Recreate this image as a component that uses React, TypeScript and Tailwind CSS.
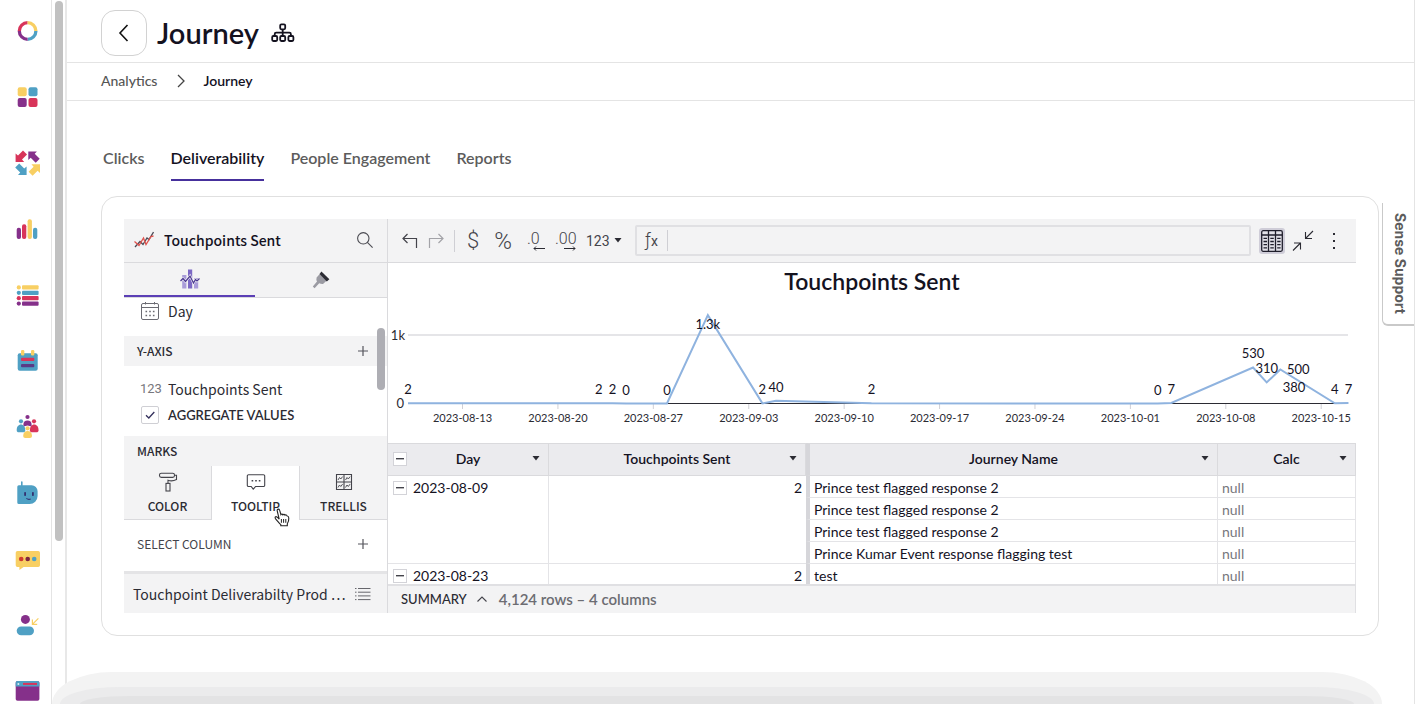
import React from 'react';
import { clsx } from 'clsx';

const RED = '#d8345a';
const YELLOW = '#f8cf63';
const BLUE = '#4fa0c4';
const PURPLE = '#85308a';

const ARROW = 'M0 0H8.6L6.4 2.4L11.4 7.4L7.4 11.4L2.4 6.4L0 8.6Z';

interface NavItem {
  label: string;
  icon: React.ReactNode;
}

const navItems: NavItem[] = [
  {
    label: 'Home',
    icon: (
      <g fill="none" strokeWidth="3.3">
        <path d="M6.3 15a8.3 8.3 0 0 1 8.3-8.3" stroke={RED} />
        <path d="M14.6 6.7a8.3 8.3 0 0 1 8.3 8.3" stroke={YELLOW} />
        <path d="M22.9 15a8.3 8.3 0 0 1-8.3 8.3" stroke={BLUE} />
        <path d="M14.6 23.3a8.3 8.3 0 0 1-8.3-8.3" stroke={PURPLE} />
      </g>
    ),
  },
  {
    label: 'Apps',
    icon: (
      <>
        <rect x="4.7" y="5.3" width="9" height="9" rx="2" fill={YELLOW} />
        <rect x="15.5" y="5.3" width="9" height="9" rx="2" fill={BLUE} />
        <rect x="4.7" y="16" width="9" height="9" rx="2" fill={PURPLE} />
        <rect x="15.5" y="16" width="9" height="9" rx="2" fill={RED} />
      </>
    ),
  },
  {
    label: 'Journeys',
    icon: (
      <>
        <path d={ARROW} fill={RED} transform="translate(2.6 14) scale(1 -1)" />
        <path d={ARROW} fill={PURPLE} transform="translate(15.3 3.4)" />
        <path d={ARROW} fill={BLUE} transform="translate(13.6 27) scale(-1 -1)" />
        <path d={ARROW} fill={YELLOW} transform="translate(27 16.3) scale(-1 1)" />
      </>
    ),
  },
  {
    label: 'Analytics',
    icon: (
      <>
        <rect x="3.7" y="13.7" width="4.3" height="11.3" rx="2" fill={PURPLE} />
        <rect x="9" y="10.3" width="4.3" height="14.7" rx="2" fill={RED} />
        <rect x="14.6" y="5.3" width="4.3" height="19.7" rx="2" fill={YELLOW} />
        <rect x="20" y="13.7" width="4.3" height="11.3" rx="2" fill={BLUE} />
      </>
    ),
  },
  {
    label: 'Lists',
    icon: (
      <>
        {[YELLOW, BLUE, RED, PURPLE].map((color, i) => (
          <g key={color} fill={color}>
            <circle cx="5.8" cy={7.4 + i * 5.4} r="2.1" />
            <rect x="9" y={5.3 + i * 5.4} width="16.6" height="4.2" rx="1" />
          </g>
        ))}
      </>
    ),
  },
  {
    label: 'Calendar',
    icon: (
      <>
        <rect x="4.7" y="7.3" width="20" height="17.4" rx="2" fill={BLUE} />
        <rect x="8" y="4" width="3.3" height="5.5" rx="1.2" fill={YELLOW} />
        <rect x="18" y="4" width="3.3" height="5.5" rx="1.2" fill={YELLOW} />
        <rect x="8" y="11.8" width="13.3" height="3.2" rx="1" fill={RED} />
        <rect x="8" y="18" width="13.3" height="3.2" rx="1" fill="#5b3a86" />
      </>
    ),
  },
  {
    label: 'Contacts',
    icon: (
      <>
        <circle cx="14.5" cy="5" r="2.1" fill={PURPLE} />
        <circle cx="8" cy="9.3" r="2.1" fill={BLUE} />
        <circle cx="21" cy="9.3" r="2.1" fill={RED} />
        <path d="M10.4 14.5V12.6a4.1 4.1 0 0 1 8.2 0V14.5L14.5 13.6Z" fill={PURPLE} />
        <path d="M3.7 18.2c0-3.4 1.8-5.6 4.3-5.6s4.3 2.2 4.3 5.6c0 1.5-.8 2-2.1 2H5.8c-1.3 0-2.1-.5-2.1-2Z" fill={BLUE} />
        <path d="M16.9 18.2c0-3.4 1.8-5.6 4.3-5.6s4.3 2.2 4.3 5.6c0 1.5-.8 2-2.1 2H19c-1.3 0-2.1-.5-2.1-2Z" fill={RED} />
        <circle cx="14.6" cy="16.3" r="2.1" fill={YELLOW} />
        <path d="M10.2 23.8c0-2.8 1.8-4.8 4.4-4.8s4.4 2 4.4 4.8c0 1.6-.8 2.2-2.1 2.2h-4.6c-1.3 0-2.1-.6-2.1-2.2Z" fill={YELLOW} />
      </>
    ),
  },
  {
    label: 'Assistant',
    icon: (
      <>
        <rect x="8" y="3.3" width="1.6" height="5" rx=".8" fill={BLUE} />
        <path d="M5.8 7.3H18.6a6 6 0 0 1 6 6V18a8 8 0 0 1-8 8H5.8a1.5 1.5 0 0 1-1.5-1.5V8.8a1.5 1.5 0 0 1 1.5-1.5Z" fill={BLUE} />
        <rect x="11.2" y="14" width="1.8" height="4" rx=".8" fill="#33306f" />
        <rect x="19" y="14" width="1.8" height="4" rx=".8" fill="#33306f" />
        <path d="M13.4 20.4q2 1.6 4.3.6" fill="none" stroke="#33306f" strokeWidth="1.1" />
      </>
    ),
  },
  {
    label: 'Messages',
    icon: (
      <>
        <path d="M4.5 7h20.7a1.8 1.8 0 0 1 1.8 1.8v12.4a1.8 1.8 0 0 1-1.8 1.8H10.6L6.4 26V23H4.5a1.8 1.8 0 0 1-1.8-1.8V8.8A1.8 1.8 0 0 1 4.5 7Z" fill={YELLOW} />
        <circle cx="8.2" cy="15" r="2.3" fill="#cf3a2e" />
        <circle cx="14.7" cy="15" r="2.3" fill="#7d2440" />
        <circle cx="21.2" cy="15" r="2.3" fill={BLUE} />
      </>
    ),
  },
  {
    label: 'Referrals',
    icon: (
      <>
        <circle cx="12.4" cy="9.4" r="4.5" fill={PURPLE} />
        <rect x="3.7" y="16.4" width="17.3" height="8.8" rx="4.4" fill={BLUE} />
        <path d="M25.4 8.3L19.6 14.1M19.4 9.6V14.4H24.2" fill="none" stroke={YELLOW} strokeWidth="1.2" />
      </>
    ),
  },
  {
    label: 'Pages',
    icon: (
      <>
        <rect x="2.7" y="5" width="23.7" height="19.7" rx="1.8" fill={PURPLE} />
        <path d="M4.5 5h20.1a1.8 1.8 0 0 1 1.8 1.8V10.6H2.7V6.8A1.8 1.8 0 0 1 4.5 5Z" fill={BLUE} />
        <path d="M10 7.9H24" stroke={RED} strokeWidth="2" />
        <circle cx="5.4" cy="7.9" r="1" fill="#d9eef6" />
      </>
    ),
  },
];

function Sidebar() {
  return (
    <aside className="sticky top-0 flex h-screen shrink-0 overflow-hidden">
      <nav className="flex w-[52px] flex-col gap-9 border-r border-[#e4e4e4] pt-4 pl-[13px]">
        {navItems.map((item) => (
          <a key={item.label} href="#" aria-label={item.label} className="block size-[30px] shrink-0">
            <svg viewBox="0 0 30 30" className="size-[30px]">
              {item.icon}
            </svg>
          </a>
        ))}
      </nav>
      <div className="w-[15px] border-r-2 border-[#e8e8e8] pt-px pl-[3px]">
        <div className="h-[540px] w-2 rounded-full bg-[#c1c1c1]" />
      </div>
    </aside>
  );
}

function PageHeader() {
  return (
    <>
      <header className="flex h-[63px] items-center border-b border-[#e4e4e4] pt-1 pl-[34px]">
        <button aria-label="Back" className="flex size-[46px] items-center justify-center rounded-[14px] border border-[#d2d2d2]">
          <svg viewBox="0 0 16 18" className="h-[18px] w-4" fill="none" stroke="#111" strokeWidth="1.6">
            <path d="M11.5 1L4 9L11.5 17" />
          </svg>
        </button>
        <h1 className="ml-[10px] text-[29px] leading-9 font-semibold text-[#14121f]">Journey</h1>
        <svg viewBox="0 0 24 20" className="ml-3 h-5 w-6" fill="none" stroke="#14121f" strokeWidth="1.8">
          <rect x="9.2" y="1.3" width="5" height="5" rx="1.2" />
          <rect x="1.2" y="13" width="5" height="5" rx="1.2" />
          <rect x="9.2" y="13" width="5" height="5" rx="1.2" />
          <rect x="17.4" y="13" width="5" height="5" rx="1.2" />
          <path d="M11.7 6.3V13M3.7 13V11.2A1.5 1.5 0 0 1 5.2 9.7H18.4A1.5 1.5 0 0 1 19.9 11.2V13" />
        </svg>
      </header>
      <nav aria-label="Breadcrumb" className="flex h-[38px] items-center border-b border-[#e4e4e4] pb-px pl-[34px] text-[14px] leading-5">
        <a href="#" className="font-medium text-[#555]">
          Analytics
        </a>
        <svg viewBox="0 0 8 14" className="mr-[18px] ml-5 h-[14px] w-2" fill="none" stroke="#444" strokeWidth="1.3">
          <path d="M1 1L7 7L1 13" />
        </svg>
        <span className="font-semibold text-[#14121f]">Journey</span>
      </nav>
    </>
  );
}

const tabs = ['Clicks', 'Deliverability', 'People Engagement', 'Reports'];

function Tabs() {
  return (
    <nav className="mt-11 flex gap-[26px] pl-[2px] text-[16px] leading-[26px] font-semibold">
      {tabs.map((tab) => (
        <a
          key={tab}
          href="#"
          className={clsx(
            'h-9 border-b-2',
            tab === 'Deliverability' ? 'border-[#46309c] text-[#14121f]' : 'border-transparent text-[#5c5c5c]'
          )}
        >
          {tab}
        </a>
      ))}
    </nav>
  );
}

function Caret() {
  return (
    <svg viewBox="0 0 8 5" className="h-[5px] w-2" fill="#2b2b33">
      <path d="M0.5 0H7.5L4 4.5Z" />
    </svg>
  );
}

function PlusIcon() {
  return (
    <svg viewBox="0 0 10 10" className="size-[10px]" stroke="#55555c" strokeWidth="1.2">
      <path d="M5 0V10M0 5H10" />
    </svg>
  );
}

function PanelHeader() {
  return (
    <div className="flex h-11 items-center border-b border-[#dadadd] bg-[#f3f3f4] px-[10px] pb-px">
      <svg viewBox="0 0 20 18" className="h-[18px] w-5" fill="none" strokeWidth="1.3">
        <path d="M1 16L6 10.5L9 13.5L13 7L15 8.5L19.5 1" stroke="#4b4b57" />
        <path d="M0.5 10.5L5 14.5L9.5 7L12 13.5L17 5.5L19.5 5" stroke="#e0524d" />
      </svg>
      <h2 className="ml-[10px] grow text-[14px] leading-6 font-medium text-[#14121f]">Touchpoints Sent</h2>
      <button aria-label="Search" className="mr-1">
        <svg viewBox="0 0 16 16" className="size-4" fill="none" stroke="#4b4b52" strokeWidth="1.1">
          <circle cx="6.3" cy="6.3" r="5.7" />
          <path d="M10.4 10.4L15.6 15.6" />
        </svg>
      </button>
    </div>
  );
}

function PanelModes() {
  return (
    <div className="flex h-[35px] border-b border-[#dadadd] bg-[#f3f3f4]">
      <button aria-label="Properties" className="flex w-[131px] items-center justify-center border-b-2 border-[#5b3fb5]">
        <svg viewBox="0 0 20 20" className="size-5">
          <rect x="2.2" y="6" width="4.2" height="13.5" fill="#a99cd9" />
          <rect x="8" y="0.5" width="4.2" height="19" fill="#7c68c4" />
          <rect x="14" y="9" width="4.2" height="10.5" fill="#a99cd9" />
          <path d="M0.5 12L3 9.5L5.5 12.5L10 7L13.5 14L15.5 10.5L17 12L19.5 9.5" fill="none" stroke="#f3f3f4" strokeWidth="2.4" />
          <path d="M0.5 12L3 9.5L5.5 12.5L10 7L13.5 14L15.5 10.5L17 12L19.5 9.5" fill="none" stroke="#4a3790" strokeWidth="1.2" />
        </svg>
      </button>
      <button aria-label="Format" className="flex grow items-center justify-center">
        <svg viewBox="0 0 18 18" className="size-[18px]">
          <path d="M8.2 2.6L14.8 9.6L11 13Q9 13.2 7.2 12.2L2.6 17.2L0.8 15.6L5 10.6Q4 8.4 4.6 6.4Z" fill="#9b9ba3" />
          <path d="M9.4 0.6L17.4 8.2L14.8 10.4L7.6 3Z" fill="#2b2b33" />
        </svg>
      </button>
    </div>
  );
}

function CalendarIcon() {
  return (
    <svg viewBox="0 0 18 18" className="size-[18px]" fill="none" stroke="#6b6b72" strokeWidth="1">
      <rect x="0.5" y="1.5" width="17" height="16" rx="1.5" />
      <path d="M0.5 5.5H17.5M4.5 0V2.5M13.5 0V2.5" />
      <path d="M4.5 9.5H13.5M4.5 13.5H13.5" strokeWidth="1.6" strokeDasharray="1.6 2.1" />
    </svg>
  );
}

function ColorIcon() {
  return (
    <svg viewBox="0 0 20 20" className="size-5" fill="none" stroke="#44444b" strokeWidth="1.1">
      <rect x="1.5" y="1.2" width="15" height="4.2" rx="1.8" />
      <path d="M16.5 3.3H18.5V7.6Q14 9.8 10 8.2V11.4" />
      <rect x="8" y="11.4" width="4" height="7.6" />
    </svg>
  );
}

function TooltipIcon() {
  return (
    <svg viewBox="0 0 20 20" className="size-5" fill="none" stroke="#44444b" strokeWidth="1.1">
      <path d="M2.5 2.8H17.5A1.2 1.2 0 0 1 18.7 4V13.3A1.2 1.2 0 0 1 17.5 14.5H9.6L7.2 17.2L5.2 14.5H2.5A1.2 1.2 0 0 1 1.3 13.3V4A1.2 1.2 0 0 1 2.5 2.8Z" />
      <path d="M5.6 8.8H7.2M9.2 8.8H10.8M12.8 8.8H14.4" strokeWidth="1.5" />
    </svg>
  );
}

function TrellisIcon() {
  return (
    <svg viewBox="0 0 20 20" className="size-5" fill="none" stroke="#44444b" strokeWidth="1.1">
      <path d="M2.5 2.5H17.5V17.5H2.5ZM10 2.5V17.5M2.5 10H17.5" />
      <path
        d="M4 8L5.5 5.5L6.8 7L8.6 4.6M11.5 8L13 5.5L14.3 7L16.1 4.6M4 15.5L5.5 13L6.8 14.5L8.6 12.1M11.5 15.5L13 13L14.3 14.5L16.1 12.1"
        strokeWidth="0.9"
      />
    </svg>
  );
}

function HandCursor() {
  return (
    <svg viewBox="0 0 16 19" className="pointer-events-none absolute top-[42px] right-[9px] h-[19px] w-4">
      <path
        d="M5.2 11.2L3.2 2.8C3 1.8 3.6 1.1 4.3 1.1S5.5 1.6 5.7 2.4L6.9 6.6C7.3 5.9 8.5 5.9 8.9 6.8C9.5 6 10.7 6.2 11 7.2C11.7 6.6 12.8 6.8 13.2 8C14.2 8 14.7 8.8 14.8 10C14.9 12.4 14.4 14.2 13.3 15.8V17.8H6.8V16.6C5.4 15.4 3.8 13.2 1.6 10.8C0.9 9.9 1 9.2 1.6 8.8C2.3 8.3 3.3 8.8 5.2 11.2Z"
        fill="#fff"
        stroke="#222"
        strokeWidth="1.1"
      />
      <path d="M7.4 11V14.8M9.6 11V14.8M11.8 11V14.8" stroke="#222" strokeWidth="1" />
    </svg>
  );
}

const marks = [
  { label: 'COLOR', icon: <ColorIcon /> },
  { label: 'TOOLTIP', icon: <TooltipIcon /> },
  { label: 'TRELLIS', icon: <TrellisIcon /> },
];

function EditorPanel() {
  return (
    <div className="flex w-[264px] shrink-0 flex-col border-r border-[#dadadd] font-['Noto_Sans_CJK_SC','Open_Sans',sans-serif] text-[#2b2b33]">
      <PanelHeader />
      <PanelModes />
      <div className="relative grow">
        <div className="mb-3 flex h-[26px] items-center pl-[17px]">
          <CalendarIcon />
          <span className="ml-[9px] text-[14px] leading-6">Day</span>
        </div>
        <div className="flex h-[30px] items-center justify-between bg-[#f3f3f4] pr-[19px] pl-[13px]">
          <h3 className="text-[12px] leading-5 font-medium">Y-AXIS</h3>
          <button aria-label="Add y-axis column">
            <PlusIcon />
          </button>
        </div>
        <div className="pt-[10px] pb-2 pl-4">
          <div className="flex h-[26px] items-center pb-px">
            <span className="w-7 font-['Roboto',sans-serif] text-[13px] leading-5 text-[#77777d]">123</span>
            <span className="text-[14px] leading-6">Touchpoints Sent</span>
          </div>
          <label className="flex h-[26px] items-center">
            <span className="mr-[9px] ml-px grid size-[18px]">
              <input
                type="checkbox"
                defaultChecked
                className="peer col-start-1 row-start-1 size-[18px] appearance-none rounded-[2px] border border-[#cfcfd4] bg-white"
              />
              <svg
                viewBox="0 0 18 18"
                className="pointer-events-none col-start-1 row-start-1 hidden peer-checked:block"
                fill="none"
                stroke="#33305c"
                strokeWidth="1.3"
              >
                <path d="M5 9.3L7.8 12L13.3 6" />
              </svg>
            </span>
            <span className="font-['Lato',sans-serif] text-[13px] leading-5 font-semibold">AGGREGATE VALUES</span>
          </label>
        </div>
        <h3 className="flex h-[30px] items-center bg-[#f3f3f4] pl-[13px] text-[12px] leading-5 font-medium">MARKS</h3>
        <div className="grid h-[54px] grid-cols-[87px_89px_1fr]">
          {marks.map(({ label, icon }) => (
            <button
              key={label}
              className={clsx(
                'relative flex flex-col items-center pt-[6px] text-[12px] leading-5 font-medium',
                label === 'TOOLTIP' ? 'border-x border-[#dadadd] bg-white' : 'border-b border-[#dadadd] bg-[#f3f3f4]'
              )}
            >
              {icon}
              <span className="mt-1">{label}</span>
              {label === 'TOOLTIP' && <HandCursor />}
            </button>
          ))}
        </div>
        <div className="flex h-[51px] items-center justify-between pr-[19px] pb-1 pl-[13px]">
          <span className="text-[12px] leading-5 text-[#44444b]">SELECT COLUMN</span>
          <button aria-label="Add tooltip column">
            <PlusIcon />
          </button>
        </div>
        <div className="absolute top-[30px] right-[2px] h-[62px] w-2 rounded-full bg-[#aeaeb4]" />
      </div>
      <div className="flex h-[42px] items-center justify-between border-t-3 border-[#e4e4e6] bg-[#f3f3f4] pr-4 pl-[9px]">
        <span className="text-[14px] leading-6">Touchpoint Deliverabilty Prod …</span>
        <svg viewBox="0 0 16 14" className="h-[14px] w-4" stroke="#66666c" strokeWidth="1">
          <path d="M0 1.5H1.5M0 5.2H1.5M0 8.9H1.5M0 12.6H1.5M3 1.5H15.5M3 5.2H15.5M3 8.9H15.5M3 12.6H15.5" />
        </svg>
      </div>
    </div>
  );
}

function Toolbar() {
  return (
    <div className="flex h-11 items-center border-b border-[#dadadd] bg-[#f3f3f4] pr-5 pl-[14px] font-['Roboto',sans-serif] text-[#44444b]">
      <button aria-label="Undo">
        <svg viewBox="0 0 16 16" className="size-4" fill="none" stroke="#44444b" strokeWidth="1.2">
          <path d="M5.5 1L1 5.5L5.5 10M1 5.5H14.5V15" />
        </svg>
      </button>
      <button aria-label="Redo" className="ml-[10px]">
        <svg viewBox="0 0 16 16" className="size-4" fill="none" stroke="#a3a3a8" strokeWidth="1.2">
          <path d="M10.5 1L15 5.5L10.5 10M15 5.5H1.5V15" />
        </svg>
      </button>
      <div className="ml-[10px] h-[22px] w-px bg-[#cfcfd4]" />
      <button aria-label="Currency" className="ml-3 w-3 text-[22px] leading-7 font-light">
        $
      </button>
      <button aria-label="Percent" className="ml-[14px] w-5 text-[24px] leading-7 font-light">
        %
      </button>
      <button aria-label="Fewer decimals" className="ml-[14px] flex w-[18px] flex-col items-start">
        <span className="text-[16px] leading-4 font-light">.0</span>
        <svg viewBox="0 0 12 5" className="-mt-px ml-[6px] h-[5px] w-3" fill="none" stroke="#2b2b33">
          <path d="M12 2.5H1M3 0.5L1 2.5L3 4.5" />
        </svg>
      </button>
      <button aria-label="More decimals" className="ml-[10px] flex w-[21px] flex-col items-start">
        <span className="text-[16px] leading-4 font-light">.00</span>
        <svg viewBox="0 0 12 5" className="-mt-px ml-[9px] h-[5px] w-3" fill="none" stroke="#2b2b33">
          <path d="M0 2.5H11M9 0.5L11 2.5L9 4.5" />
        </svg>
      </button>
      <label className="ml-[10px] grid w-9 items-center">
        <select aria-label="Number format" className="col-start-1 row-start-1 w-9 appearance-none text-[14px] leading-5">
          <option>123</option>
        </select>
        <span className="pointer-events-none col-start-1 row-start-1 justify-self-end">
          <Caret />
        </span>
      </label>
      <label className="ml-[13px] flex h-[31px] min-w-0 grow items-center rounded-[2px] border-2 border-[#e0e0e3] pl-2">
        <span className="flex w-[23px] items-baseline border-r border-[#cfcfd4] text-[18px] leading-5 font-light">
          ƒ<span className="text-[14px] font-normal">x</span>
        </span>
        <input aria-label="Formula" className="min-w-0 grow bg-transparent px-2 text-[14px] outline-none" />
      </label>
      <button aria-label="Toggle table" className="ml-2 flex size-[26px] items-center justify-center rounded-[3px] bg-[#cfcdd8]">
        <svg viewBox="0 0 22 22" className="size-[22px]" fill="none" stroke="#1f1e2b" strokeWidth="1.3">
          <rect x="0.7" y="0.7" width="20.6" height="20.6" rx="1.5" fill="#e2e1e8" />
          <path d="M0.7 5H21.3M7.5 0.7V21.3M14.5 0.7V21.3" />
          <path d="M2.5 8.3H6M2.5 11.5H6M2.5 14.7H6M2.5 17.9H6M9.3 8.3H12.8M9.3 11.5H12.8M9.3 14.7H12.8M9.3 17.9H12.8M16.2 8.3H19.6M16.2 11.5H19.6M16.2 14.7H19.6M16.2 17.9H19.6" />
        </svg>
      </button>
      <button aria-label="Collapse" className="ml-[7px]">
        <svg viewBox="0 0 22 22" className="size-[22px]" fill="none" stroke="#2b2b33" strokeWidth="1.1">
          <path d="M21 1L14 8M13.5 2V8.5H20M1 20.5L8 13.5M2 13H8.5V19.5" />
        </svg>
      </button>
      <button aria-label="More" className="ml-[18px]">
        <svg viewBox="0 0 4 16" className="h-4 w-1" fill="#2b2b33">
          <rect x="1" y="0" width="2" height="2" />
          <rect x="1" y="7" width="2" height="2" />
          <rect x="1" y="14" width="2" height="2" />
        </svg>
      </button>
    </div>
  );
}

interface Point {
  day: number; // days since 2023-08-09
  value: number;
  label: string;
  dx?: number;
  dy?: number;
}

const points: Point[] = [
  { day: 0, value: 2, label: '2' },
  { day: 14, value: 2, label: '2' },
  { day: 15, value: 2, label: '2' },
  { day: 16, value: 0, label: '0' },
  { day: 19, value: 0, label: '0' },
  { day: 22, value: 1300, label: '1.3k', dy: 14 },
  { day: 26, value: 2, label: '2' },
  { day: 27, value: 40, label: '40' },
  { day: 34, value: 2, label: '2' },
  { day: 55, value: 0, label: '0' },
  { day: 56, value: 7, label: '7' },
  { day: 62, value: 530, label: '530' },
  { day: 63, value: 310, label: '310' },
  { day: 64, value: 500, label: '500', dx: 18, dy: 4 },
  { day: 68, value: 4, label: '4' },
  { day: 69, value: 7, label: '7' },
];

const ticks = [
  '2023-08-13',
  '2023-08-20',
  '2023-08-27',
  '2023-09-03',
  '2023-09-10',
  '2023-09-17',
  '2023-09-24',
  '2023-10-01',
  '2023-10-08',
  '2023-10-15',
];

const xScale = (day: number) => 20 + day * 13.63;
const yScale = (value: number) => 140.5 - value * 0.068;

function Chart() {
  return (
    <svg viewBox="0 0 968 180" className="block h-auto w-full" fontFamily="Lato, sans-serif" fill="#2b2b33">
      <text x="484" y="27" fontSize="23" fontWeight="600" textAnchor="middle" fill="#14121f">
        Touchpoints Sent
      </text>
      <path d="M20 72H960" stroke="#dcdce0" strokeWidth="1.5" />
      <path d="M20 140.5H960" stroke="#2b2b33" strokeWidth="1.2" />
      <g fontSize="13" textAnchor="end">
        <text x="17" y="77">
          1k
        </text>
        <text x="16" y="145">
          0
        </text>
      </g>
      {ticks.map((tick, i) => (
        <g key={tick}>
          <path d={`M${xScale(4 + i * 7)} 141V146`} stroke="#d0d0d6" />
          <text x={xScale(4 + i * 7)} y="159" fontSize="11" textAnchor="middle">
            {tick}
          </text>
        </g>
      ))}
      <polyline
        points={points.map((p) => `${xScale(p.day)},${yScale(p.value)}`).join(' ')}
        fill="none"
        stroke="#8fb3df"
        strokeWidth="2"
      />
      <g fontSize="13" textAnchor="middle" fill="#14121f">
        {points.map((p) => (
          <text key={p.day} x={xScale(p.day) + (p.dx ?? 0)} y={yScale(p.value) + (p.dy ?? -9)}>
            {p.label}
          </text>
        ))}
        <text x={xScale(65)} y="129">
          380
        </text>
      </g>
    </svg>
  );
}

function Collapse({ label }: { label: string }) {
  return (
    <button aria-label={label} className="flex size-[14px] shrink-0 items-center justify-center border border-[#d3d3d8] bg-white">
      <svg viewBox="0 0 8 2" className="h-[2px] w-2" fill="#44444b">
        <rect width="8" height="1.4" />
      </svg>
    </button>
  );
}

function ColumnHeader({ label, className, collapse }: { label: string; className?: string; collapse?: boolean }) {
  return (
    <th className={clsx('h-[33px] border-y border-r border-[#dadadd] bg-[#ebebee] px-[5px] pt-0 pb-[2px] font-semibold', className)}>
      <div className="grid grid-cols-[14px_1fr_14px] items-center">
        {collapse ? <Collapse label="Collapse all" /> : <span />}
        <span>{label}</span>
        <button aria-label={`${label} menu`} className="flex justify-center">
          <Caret />
        </button>
      </div>
    </th>
  );
}

interface Group {
  day: string;
  sent: number;
  journeys: string[];
}

const groups: Group[] = [
  {
    day: '2023-08-09',
    sent: 2,
    journeys: [
      'Prince test flagged response 2',
      'Prince test flagged response 2',
      'Prince test flagged response 2',
      'Prince Kumar Event response flagging test',
    ],
  },
  { day: '2023-08-23', sent: 2, journeys: ['test'] },
];

function DataTable() {
  return (
    <div className="h-[141px] overflow-hidden">
      <table className="w-full table-fixed border-separate border-spacing-0 text-[14px] leading-[18px] text-[#14121f]">
        <thead>
          <tr>
            <ColumnHeader label="Day" className="w-[161px]" collapse />
            <ColumnHeader label="Touchpoints Sent" className="w-[257px]" />
            <ColumnHeader label="Journey Name" className="border-l-4 border-l-[#d6d6da]" />
            <ColumnHeader label="Calc" className="w-[138px]" />
          </tr>
        </thead>
        <tbody>
          {groups.map((group) =>
            group.journeys.map((journey, i) => (
              <tr key={`${group.day}-${i}`}>
                {i === 0 && (
                  <>
                    <td rowSpan={group.journeys.length} className="border-r border-b border-[#e4e4e7] p-0 pt-[3px] pl-[5px] align-top">
                      <div className="flex items-center gap-[6px]">
                        <Collapse label={`Collapse ${group.day}`} />
                        {group.day}
                      </div>
                    </td>
                    <td rowSpan={group.journeys.length} className="border-b border-[#e4e4e7] p-0 pt-[3px] pr-1 text-right align-top">
                      {group.sent}
                    </td>
                  </>
                )}
                <td className="h-[22px] border-r border-b border-l-4 border-[#e4e4e7] border-l-[#d6d6da] p-0 pt-[3px] pl-1">
                  {journey}
                </td>
                <td className="h-[22px] border-r border-b border-[#e4e4e7] p-0 pt-[3px] pl-1 text-[#77777d]">null</td>
              </tr>
            ))
          )}
        </tbody>
      </table>
    </div>
  );
}

function Summary() {
  return (
    <div className="flex h-[29px] items-center border-t-2 border-r border-[#e0e0e3] bg-[#f3f3f4] pb-px pl-[13px]">
      <button className="flex items-center gap-[10px] text-[13px] leading-5 font-medium text-[#2b2b33]">
        SUMMARY
        <svg viewBox="0 0 10 6" className="h-[6px] w-[10px]" fill="none" stroke="#44444b" strokeWidth="1.1">
          <path d="M0.5 5.5L5 1L9.5 5.5" />
        </svg>
      </button>
      <span className="ml-3 text-[15px] leading-5 font-semibold text-[#6c6c72]">4,124 rows – 4 columns</span>
    </div>
  );
}

function SupportTab() {
  return (
    <button className="fixed top-[203px] right-[2px] flex h-[123px] w-8 items-center justify-center rounded-bl-md border-b-2 border-l border-[#c9c9c9] bg-white pl-[3px] font-['Inter',sans-serif] text-[14px] leading-5 font-bold text-[#5c5c5c] [writing-mode:vertical-rl]">
      Sense Support
    </button>
  );
}

function BottomShade() {
  return (
    <div className="pointer-events-none fixed right-[34px] bottom-0 left-[52px] h-8 overflow-hidden rounded-t-[60px_32px] bg-[#f3f3f3]">
      <div className="mx-2 mt-[15px] h-[17px] overflow-hidden rounded-t-[60px_17px] bg-[#ebebec]">
        <div className="mx-5 mt-[9px] h-2 rounded-t-[50px_8px] bg-[#e3e3e4]" />
      </div>
    </div>
  );
}

export default function App() {
  return (
    <div className="flex min-h-screen bg-white font-['Lato',sans-serif]">
      <Sidebar />
      <main className="mr-px min-w-0 grow border-r border-[#e4e4e4]">
        <PageHeader />
        <div className="pr-[35px] pl-[34px]">
          <Tabs />
          <section className="mt-[15px] rounded-2xl border border-[#e0e0e0] p-[22px]">
            <div className="flex">
              <EditorPanel />
              <div className="min-w-0 grow">
                <Toolbar />
                <Chart />
                <DataTable />
                <Summary />
              </div>
            </div>
          </section>
        </div>
      </main>
      <SupportTab />
      <BottomShade />
    </div>
  );
}
